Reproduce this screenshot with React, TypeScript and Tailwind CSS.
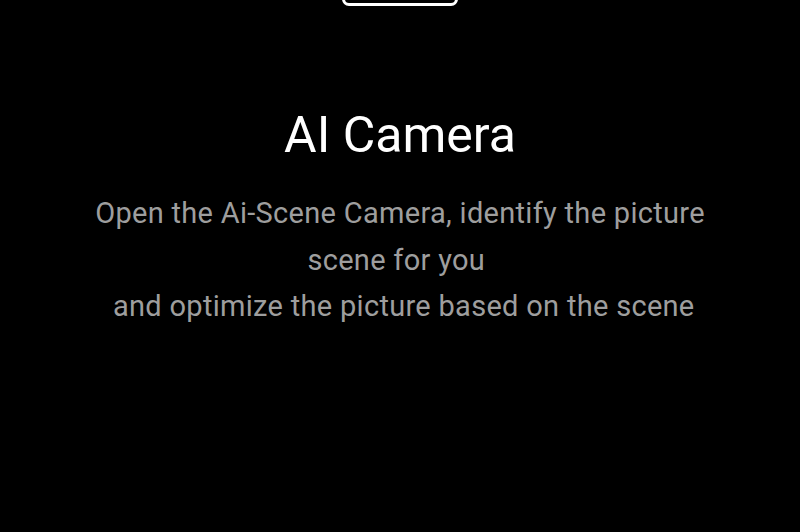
import React from 'react';

const App: React.FC = () => {
    return (
        <div
            className="w-[800px] h-[532px] bg-black overflow-hidden flex flex-col items-center"
            style={{ fontFamily: 'Roboto, "Noto Sans", sans-serif' }}
        >
            {/* bottom edge of the preview frame above */}
            <div className="w-[116px] h-[60px] -mt-[54px] border-[3px] border-white rounded-[7px] shrink-0" />

            <h1 className="mt-[99px] text-[50px] leading-[60px] text-white font-normal">AI Camera</h1>

            <p className="mt-[25px] w-[660px] text-center text-[29px] leading-[46.5px] tracking-[0.3px] text-[#9e9e9e]">
                Open the Ai-Scene Camera, identify the picture scene for you{'\u00a0'}
                <br />
                {'\u00a0'}and optimize the picture based on the scene
            </p>
        </div>
    );
};

export default App;
